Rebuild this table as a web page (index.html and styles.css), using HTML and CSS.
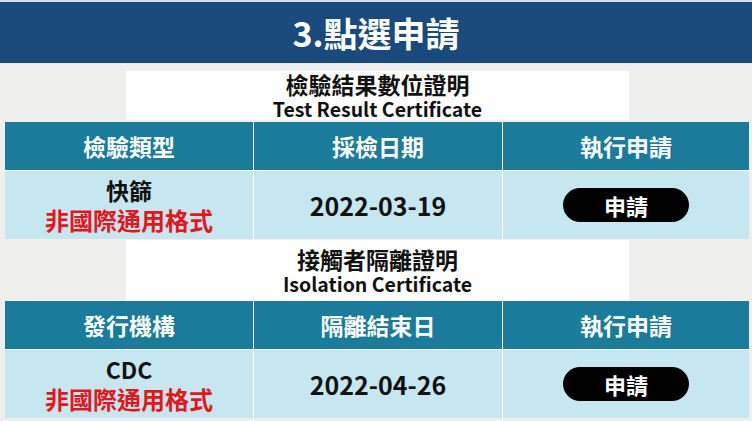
FILE: index.html
```html
<!DOCTYPE html>
<html lang="zh-Hant">
<head>
<meta charset="utf-8">
<link rel="stylesheet" href="styles.css">
</head>
<body>
<div class="topline"></div>
<header class="banner"><h1>3.點選申請</h1></header>
<div class="subline"></div>

<section class="cert first">
  <div class="cert-title">
    <div class="zh">檢驗結果數位證明</div>
    <div class="en">Test Result Certificate</div>
  </div>
  <div class="table">
    <div class="th">檢驗類型</div>
    <div class="th">採檢日期</div>
    <div class="th">執行申請</div>
    <div class="td stack"><span class="name">快篩</span><span class="warn">非國際通用格式</span></div>
    <div class="td date">2022-03-19</div>
    <div class="td"><span class="btn">申請</span></div>
  </div>
</section>

<section class="cert second">
  <div class="cert-title">
    <div class="zh">接觸者隔離證明</div>
    <div class="en">Isolation Certificate</div>
  </div>
  <div class="table">
    <div class="th">發行機構</div>
    <div class="th">隔離結束日</div>
    <div class="th">執行申請</div>
    <div class="td stack"><span class="name">CDC</span><span class="warn">非國際通用格式</span></div>
    <div class="td date">2022-04-26</div>
    <div class="td"><span class="btn">申請</span></div>
  </div>
</section>
</body>
</html>
```

FILE: styles.css
```css
* { box-sizing: border-box; }
html, body {
  margin: 0;
  padding: 0;
  background: #efefed;
  font-family: "Noto Sans CJK TC", "Noto Sans CJK SC", "Noto Sans", sans-serif;
  font-weight: 700;
  overflow: hidden;
}
.topline { height: 2px; background: #d9dfe8; }
.banner {
  height: 61px;
  background: #1a4a7c;
  display: flex;
  align-items: center;
  justify-content: center;
}
.banner h1 {
  margin: 0;
  color: #fff;
  font-size: 34px;
  line-height: 40px;
  font-weight: 700;
}
.subline { height: 1px; background: #e3e8ef; }

.cert-title {
  width: 503px;
  margin-left: 126px;
  background: #fff;
  display: flex;
  flex-direction: column;
  align-items: center;
  justify-content: center;
  color: #111;
}
.first { padding-top: 7px; }
.first .cert-title { height: 49px; margin-bottom: 2px; }
.second { padding-top: 1px; }
.second .cert-title { height: 61px; }
.cert-title .zh { font-size: 23px; line-height: 25px; }
.cert-title .en { font-size: 19.5px; line-height: 23px; }

.table {
  margin-left: 5px;
  width: 744px;
  display: grid;
  grid-template-columns: 248px 248px 246px;
  grid-template-rows: 48px 68px;
  gap: 1px;
  background: #fff;
}
.th {
  background: #1a7b9a;
  color: #fff;
  font-size: 23px;
  display: flex;
  align-items: center;
  justify-content: center;
}
.td {
  background: #c6e6f0;
  display: flex;
  align-items: center;
  justify-content: center;
  color: #111;
}
.stack { flex-direction: column; }
.name { font-size: 23px; line-height: 29px; }
.warn { font-size: 24px; line-height: 29px; color: #e8141a; }
.date { font-size: 25px; }
.btn {
  width: 126px;
  height: 34px;
  border-radius: 17px;
  background: #000;
  color: #fff;
  font-size: 22px;
  display: flex;
  align-items: center;
  justify-content: center;
}
```
